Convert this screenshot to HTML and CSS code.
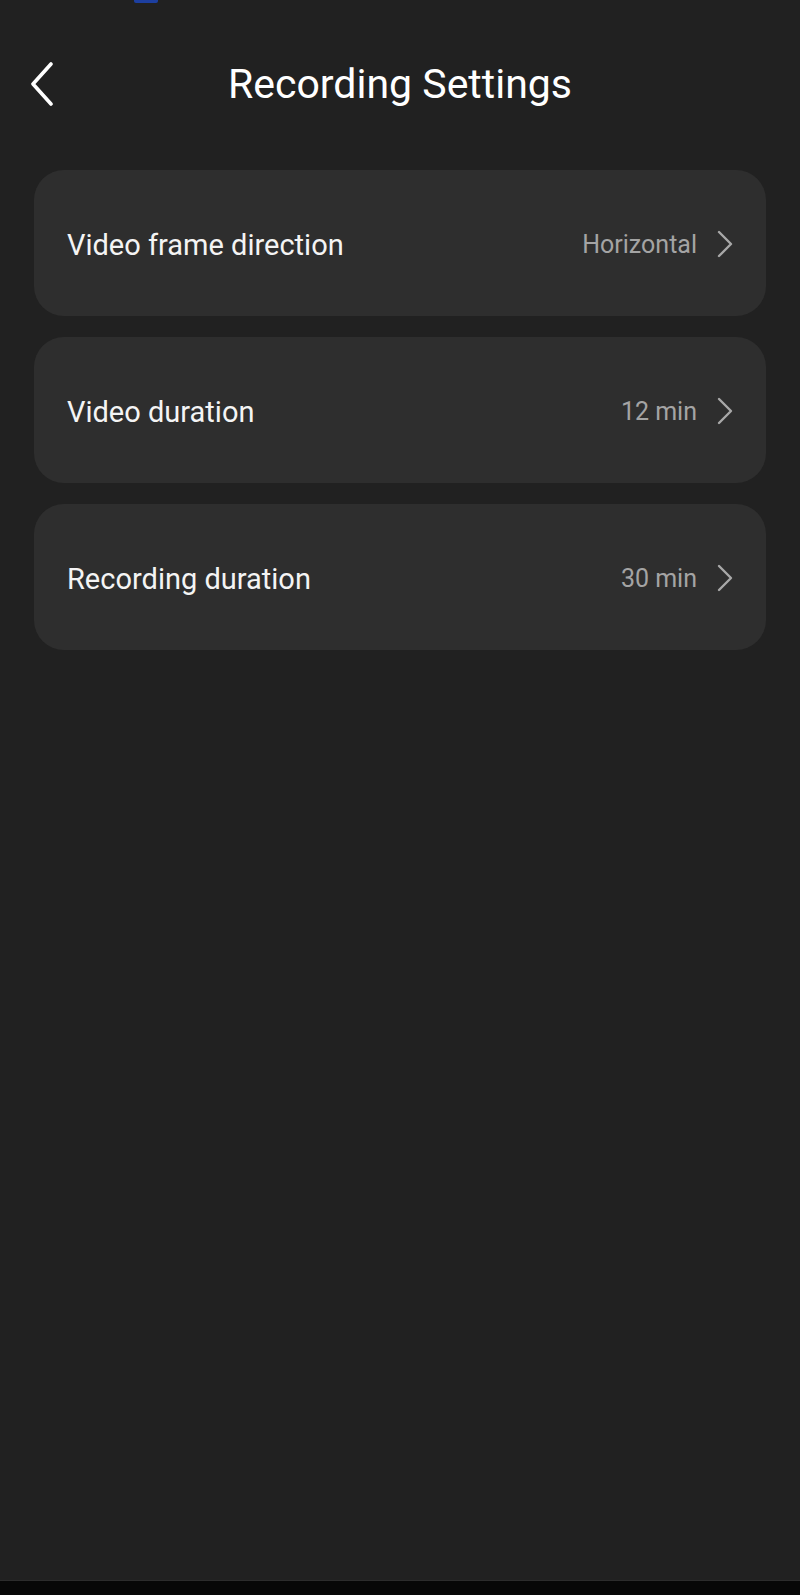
FILE: index.html
```html
<!DOCTYPE html>
<html lang="en">
<head>
<meta charset="utf-8">
<title>Recording Settings</title>
<link rel="stylesheet" href="styles.css">
</head>
<body>
<div class="page">
  <div class="status-strip"><span class="status-mark"></span></div>
  <header class="header">
    <div class="back">
      <svg class="back-icon" viewBox="0 0 24 44" width="24" height="44">
        <polyline points="21,2 3,22 21,42" fill="none" stroke="#ffffff" stroke-width="3.6" stroke-linecap="round" stroke-linejoin="round"/>
      </svg>
    </div>
    <h1 class="title">Recording Settings</h1>
    <div class="spacer"></div>
  </header>
  <main class="list">
    <div class="card">
      <span class="label">Video frame direction</span>
      <span class="value">Horizontal</span>
      <svg class="chev" viewBox="0 0 16 28" width="16" height="28"><polyline points="2,2 14,14 2,26" fill="none" stroke="#a8a8a8" stroke-width="2.4" stroke-linecap="round" stroke-linejoin="round"/></svg>
    </div>
    <div class="card">
      <span class="label">Video duration</span>
      <span class="value">12 min</span>
      <svg class="chev" viewBox="0 0 16 28" width="16" height="28"><polyline points="2,2 14,14 2,26" fill="none" stroke="#a8a8a8" stroke-width="2.4" stroke-linecap="round" stroke-linejoin="round"/></svg>
    </div>
    <div class="card">
      <span class="label">Recording duration</span>
      <span class="value">30 min</span>
      <svg class="chev" viewBox="0 0 16 28" width="16" height="28"><polyline points="2,2 14,14 2,26" fill="none" stroke="#a8a8a8" stroke-width="2.4" stroke-linecap="round" stroke-linejoin="round"/></svg>
    </div>
  </main>
  <div class="nav-bar"></div>
</div>
</body>
</html>
```
FILE: styles.css
```css
html, body {
  margin: 0;
  padding: 0;
  background: #212121;
}
body {
  font-family: Roboto, "Noto Sans", "Liberation Sans", sans-serif;
  color: #ffffff;
}
.page {
  display: flex;
  flex-direction: column;
  min-height: 1595px;
}
.status-strip {
  height: 3px;
  display: flex;
}
.status-mark {
  display: block;
  margin-left: 134px;
  width: 24px;
  height: 3px;
  background: #1d3fa0;
  border-radius: 0 0 2px 2px;
}
.header {
  height: 162px;
  display: grid;
  grid-template-columns: 1fr auto 1fr;
  align-items: center;
}
.back {
  padding-left: 30px;
  display: flex;
  align-items: center;
}
.back-icon {
  display: block;
}
.title {
  margin: 0;
  font-weight: 400;
  font-size: 41px;
  letter-spacing: 0;
  color: #ffffff;
}
.list {
  flex: 1;
  padding: 5px 34px 0;
  display: flex;
  flex-direction: column;
  gap: 21px;
}
.card {
  box-sizing: border-box;
  height: 146px;
  background: #2e2e2e;
  border-radius: 30px;
  display: flex;
  align-items: center;
  padding: 3px 33px 0 33px;
}
.label {
  flex: 1;
  font-size: 29px;
  color: #f4f4f4;
}
.value {
  font-size: 25px;
  color: #a4a4a4;
  margin-right: 20px;
}
.chev {
  display: block;
  margin-top: -2px;
}
.nav-bar {
  height: 14px;
  background: #070707;
  border-top: 1px solid #2c2c2c;
}
```
